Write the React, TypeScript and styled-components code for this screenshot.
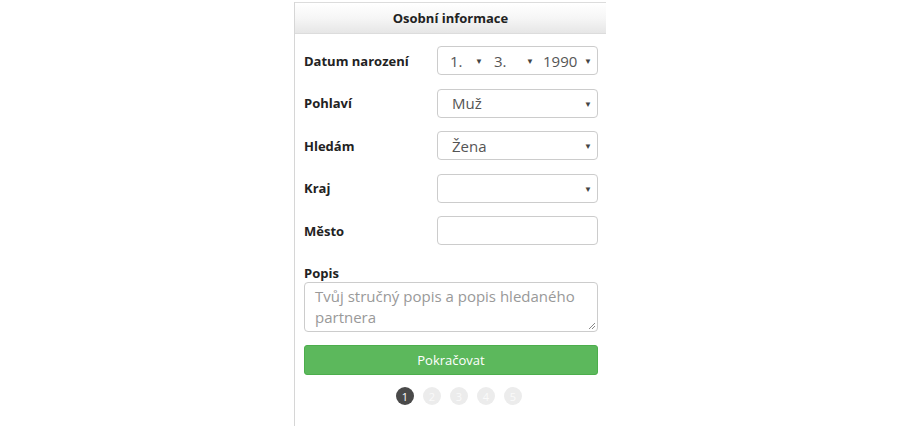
import React from "react";
import styled, { createGlobalStyle } from "styled-components";

const Global = createGlobalStyle`
  html, body { margin: 0; padding: 0; background: #fff; }
  body { font-family: "Open Sans", "Liberation Sans", sans-serif; color: #333; }
  * { box-sizing: border-box; }
`;

const Panel = styled.div`
  width: 312px;
  margin: 2px auto 0;
  border-left: 1px solid #d6d6d6;
  min-height: 424px;
`;

const Header = styled.div`
  height: 32px;
  border-top: 1px solid #dcdcdc;
  border-bottom: 1px solid #dcdcdc;
  background: linear-gradient(to bottom, #ffffff 0%, #f6f6f6 50%, #e6e6e6 100%);
  display: flex;
  align-items: center;
  justify-content: center;
  font-weight: 700;
  font-size: 13px;
  color: #222;
  padding-bottom: 1px;
`;

const Body = styled.div`
  padding: 12px 8px 0 9px;
  display: flex;
  flex-direction: column;
`;

const Rows = styled.div`
  display: flex;
  flex-direction: column;
  gap: 13.5px;
`;

const Row = styled.div`
  display: flex;
  align-items: center;
  height: 29px;
`;

const Label = styled.label`
  width: 133px;
  font-weight: 700;
  font-size: 13px;
  color: #222;
`;

const Box = styled.div`
  width: 161px;
  height: 29px;
  border: 1px solid #ccc;
  border-radius: 4px;
  display: flex;
  align-items: center;
  font-size: 15px;
  color: #555;
  background: #fff;
`;

const Part = styled.div<{ $w: number; $pl: number }>`
  width: ${(p) => p.$w}px;
  padding-left: ${(p) => p.$pl}px;
  display: flex;
  align-items: center;
  justify-content: space-between;
  padding-right: 5px;
`;

const Arrow = styled.span`
  font-size: 8px;
  color: #444;
`;

const FullSelect = styled(Box)`
  justify-content: space-between;
  padding: 0 5px 0 14px;
`;

const PopisLabel = styled(Label)`
  margin-top: 20px;
  width: auto;
  line-height: 17px;
`;

const Textarea = styled.div`
  margin-top: 0px;
  width: 294px;
  height: 50px;
  border: 1px solid #ccc;
  border-radius: 4px;
  padding: 3px 10px;
  font-size: 15px;
  line-height: 21px;
  color: #999;
  position: relative;
`;

const Grip = styled.svg`
  position: absolute;
  right: 1px;
  bottom: 1px;
`;

const Button = styled.div`
  margin-top: 13px;
  width: 294px;
  height: 30px;
  background: #5cb85c;
  border: 1px solid #4cae4c;
  border-radius: 3px;
  color: #fff;
  font-size: 13px;
  display: flex;
  align-items: center;
  justify-content: center;
`;

const Steps = styled.div`
  margin-top: 12px;
  display: flex;
  justify-content: center;
  gap: 9px;
  padding-left: 16px;
`;

const Step = styled.div<{ $active?: boolean }>`
  width: 18px;
  height: 18px;
  border-radius: 50%;
  background: ${(p) => (p.$active ? "#4a4a4a" : "#ececec")};
  color: ${(p) => (p.$active ? "#fff" : "#fafafa")};
  font-size: 11px;
  display: flex;
  align-items: center;
  justify-content: center;
`;

export default function App() {
  return (
    <>
      <Global />
      <Panel>
        <Header>Osobní informace</Header>
        <Body>
          <Rows>
            <Row>
              <Label>Datum narození</Label>
              <Box>
                <Part $w={50} $pl={12}>
                  <span>1.</span>
                  <Arrow>▼</Arrow>
                </Part>
                <Part $w={51} $pl={6}>
                  <span>3.</span>
                  <Arrow>▼</Arrow>
                </Part>
                <Part $w={58} $pl={4}>
                  <span>1990</span>
                  <Arrow>▼</Arrow>
                </Part>
              </Box>
            </Row>
            <Row>
              <Label>Pohlaví</Label>
              <FullSelect>
                <span>Muž</span>
                <Arrow>▼</Arrow>
              </FullSelect>
            </Row>
            <Row>
              <Label>Hledám</Label>
              <FullSelect>
                <span>Žena</span>
                <Arrow>▼</Arrow>
              </FullSelect>
            </Row>
            <Row>
              <Label>Kraj</Label>
              <FullSelect>
                <span></span>
                <Arrow>▼</Arrow>
              </FullSelect>
            </Row>
            <Row>
              <Label>Město</Label>
              <Box />
            </Row>
          </Rows>
          <PopisLabel>Popis</PopisLabel>
          <Textarea>
            Tvůj stručný popis a popis hledaného partnera
            <Grip width="8" height="8" viewBox="0 0 8 8">
              <path d="M7 1 L1 7 M7 4 L4 7" stroke="#888" strokeWidth="1" />
            </Grip>
          </Textarea>
          <Button>Pokračovat</Button>
          <Steps>
            <Step $active>1</Step>
            <Step>2</Step>
            <Step>3</Step>
            <Step>4</Step>
            <Step>5</Step>
          </Steps>
        </Body>
      </Panel>
    </>
  );
}
